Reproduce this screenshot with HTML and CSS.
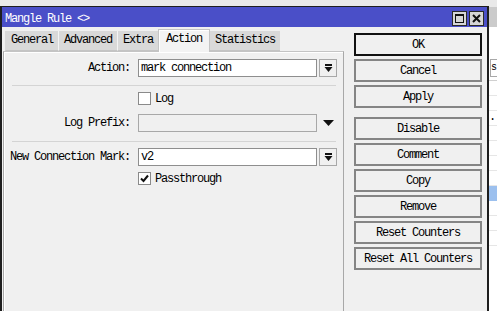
FILE: index.html
```html
<!DOCTYPE html>
<html lang="en">
  <head>
    <meta charset="UTF-8" />
    <title>Mangle Rule</title>
    <link rel="stylesheet" href="styles.css">
  </head>
  <body>
    <div class="desk">
      <!-- Rule window -->
      <div class="win">
        <div class="titlebar">
          <span class="title">Mangle Rule &lt;&gt;</span>
          <div class="tbtns">
            <span class="tbtn"><span class="max-icon"></span></span>
            <span class="tbtn">
              <svg width="9" height="9" viewBox="0 0 9 9"><path d="M1 1 L8 8 M8 1 L1 8" stroke="#111" stroke-width="2"/></svg>
            </span>
          </div>
        </div>

        <div class="content">
          <!-- Tabs and form -->
          <div class="left">
            <div class="tabs">
              <span class="tab">General</span>
              <span class="tab">Advanced</span>
              <span class="tab">Extra</span>
              <span class="tab active">Action</span>
              <span class="tab">Statistics</span>
            </div>
            <div class="panel">
              <div class="row">
                <span class="label">Action:</span>
                <span class="field">mark connection</span>
                <span class="drop">
                  <svg width="9" height="9" viewBox="0 0 9 9"><rect x="1" y="0" width="7" height="2" fill="#111"/><path d="M0.5 3 H8.5 L4.5 8 Z" fill="#111"/></svg>
                </span>
              </div>
              <div class="sep"></div>
              <div class="row check-row">
                <span class="checkbox"></span>
                <span>Log</span>
              </div>
              <div class="row prefix-row">
                <span class="label">Log Prefix:</span>
                <span class="field disabled"></span>
                <span class="arrow">
                  <svg width="11" height="6" viewBox="0 0 11 6"><path d="M0 0 H11 L5.5 6 Z" fill="#111"/></svg>
                </span>
              </div>
              <div class="sep sep2"></div>
              <div class="row">
                <span class="label">New Connection Mark:</span>
                <span class="field">v2</span>
                <span class="drop">
                  <svg width="9" height="9" viewBox="0 0 9 9"><rect x="1" y="0" width="7" height="2" fill="#111"/><path d="M0.5 3 H8.5 L4.5 8 Z" fill="#111"/></svg>
                </span>
              </div>
              <div class="row check-row pass-row">
                <span class="checkbox">
                  <svg width="11" height="11" viewBox="0 0 11 11"><path d="M2 5.5 L4.5 8 L9 2.5" fill="none" stroke="#111" stroke-width="2"/></svg>
                </span>
                <span>Passthrough</span>
              </div>
            </div>
          </div>

          <!-- Action buttons -->
          <div class="buttons">
            <button class="btn default">OK</button>
            <button class="btn">Cancel</button>
            <button class="btn">Apply</button>
            <button class="btn gap">Disable</button>
            <button class="btn">Comment</button>
            <button class="btn">Copy</button>
            <button class="btn">Remove</button>
            <button class="btn">Reset Counters</button>
            <button class="btn">Reset All Counters</button>
          </div>
        </div>
      </div>

      <!-- Window behind -->
      <div class="behind">
        <div class="b-title"></div>
        <div class="b-body">
          <div class="b-field">s</div>
          <div class="b-list">
            <div class="b-row"></div>
            <div class="b-row"></div>
            <div class="b-row dot">.</div>
            <div class="b-row"></div>
            <div class="b-row"></div>
            <div class="b-row"></div>
            <div class="b-row"></div>
            <div class="b-row sel"></div>
            <div class="b-row"></div>
            <div class="b-row"></div>
            <div class="b-row"></div>
          </div>
        </div>
      </div>
    </div>
  </body>
</html>
```

FILE: styles.css
```css
/* General */
body {
  margin: 0;
  background: #e9e9e9;
  font-family: "Liberation Mono", monospace;
  font-size: 12px;
  letter-spacing: -1.2px;
  color: #000;
}

.desk {
  display: flex;
  height: 311px;
  overflow: hidden;
}

/* Window frame */
.win {
  flex: none;
  width: 489px;
  margin-top: 6px;
  border: 2px solid #1e1e1e;
  border-top-width: 1px;
  border-bottom: none;
  background: #f0f0f0;
  box-sizing: border-box;
}

.titlebar {
  display: flex;
  align-items: center;
  justify-content: space-between;
  height: 20px;
  padding: 3px 3px 0 3px;
  box-sizing: border-box;
  background: #4a4fc8;
  color: #fff;
}

.tbtns {
  display: flex;
  gap: 2px;
}

.tbtn {
  display: flex;
  align-items: center;
  justify-content: center;
  width: 15px;
  height: 15px;
  box-sizing: border-box;
  border: 1px solid #2a2a2a;
  background: #d6d6d6;
}

.max-icon {
  width: 9px;
  height: 9px;
  box-sizing: border-box;
  border: 1px solid #111;
  border-top-width: 2px;
}

/* Content area */
.content {
  display: flex;
  align-items: flex-start;
}

.left {
  margin-left: 1px;
  width: 341px;
}

/* Tabs */
.tabs {
  display: flex;
  align-items: flex-end;
  padding: 2px 0 0 2px;
  position: relative;
  z-index: 1;
  margin-bottom: -1px;
}

.tab {
  height: 20px;
  line-height: 19px;
  padding: 0 5px;
  box-sizing: border-box;
  background: #d9d9d9;
  border-left: 1px solid #f4f4f4;
  border-bottom: 1px solid #c4c4c4;
  margin-bottom: 1px;
}

.tab:first-child {
  border-left-color: #d9d9d9;
}

.tab.active {
  height: 23px;
  line-height: 19px;
  padding: 0 7px;
  margin-bottom: 0;
  background: #f3f3f3;
  border: 1px solid #c4c4c4;
  border-bottom: none;
  box-shadow: inset 1px 1px #fff;
}

.tab.active + .tab {
  border-left: none;
}

.panel {
  height: 270px;
  padding-top: 7px;
  box-sizing: border-box;
  border: 1px solid #a8a8a8;
  border-top-color: #c4c4c4;
  border-bottom: none;
  box-shadow: inset 1px 1px #fff;
}

/* Form rows */
.row {
  display: flex;
  align-items: center;
  height: 18px;
}

.label {
  width: 126px;
  margin-right: 8px;
  text-align: right;
  white-space: nowrap;
}

.field {
  width: 179px;
  height: 18px;
  line-height: 16px;
  padding-left: 2px;
  box-sizing: border-box;
  border: 1px solid #8e8e8e;
  background: #fff;
}

.field.disabled {
  background: #f0f0f0;
  border-color: #a8a8a8;
}

.drop {
  display: flex;
  align-items: center;
  justify-content: center;
  width: 18px;
  height: 18px;
  margin-left: 2px;
  box-sizing: border-box;
  border: 1px solid #a8a8a8;
  background: #f0f0f0;
}

.arrow {
  display: flex;
  margin-left: 6px;
}

.sep {
  height: 1px;
  margin: 8px 7px 6px 8px;
  background: #d4d4d4;
}

.sep2 {
  margin-top: 9px;
}

.check-row {
  height: 13px;
  padding-left: 134px;
  gap: 4px;
}

.prefix-row {
  margin-top: 9px;
}

.pass-row {
  margin-top: 6px;
}

.checkbox {
  display: flex;
  align-items: center;
  justify-content: center;
  width: 13px;
  height: 13px;
  box-sizing: border-box;
  border: 1px solid #8a8a8a;
  background: #fff;
}

/* Buttons column */
.buttons {
  display: flex;
  flex-direction: column;
  gap: 3px;
  width: 128px;
  margin: 6px 0 0 10px;
}

.btn {
  height: 23px;
  padding: 0;
  font-family: inherit;
  font-size: 12px;
  letter-spacing: -1.2px;
  color: #000;
  background: #f0f0f0;
  border: 2px solid #858585;
}

.btn.default {
  border-color: #111;
}

.btn.gap {
  margin-top: 6px;
}

/* Window behind */
.behind {
  flex: 1;
  display: flex;
  flex-direction: column;
  min-width: 0;
}

.b-title {
  height: 20px;
  margin-top: 7px;
  background: #cbcbcb;
}

.b-body {
  flex: 1;
  background: #fff;
  padding-top: 32px;
}

.b-field {
  height: 18px;
  margin-left: 1px;
  box-sizing: border-box;
  border: 1px solid #a8a8a8;
  border-right: none;
  font-size: 10px;
  letter-spacing: -1px;
  line-height: 16px;
  overflow: hidden;
}

.b-list {
  margin-top: 3px;
  border-top: 1px solid #d0d0d0;
}

.b-row {
  height: 14px;
  border-bottom: 1px solid #e6e6e6;
  line-height: 12px;
}

.b-row.sel {
  background: #9cc0ee;
  border-bottom-color: #9cc0ee;
}
```
